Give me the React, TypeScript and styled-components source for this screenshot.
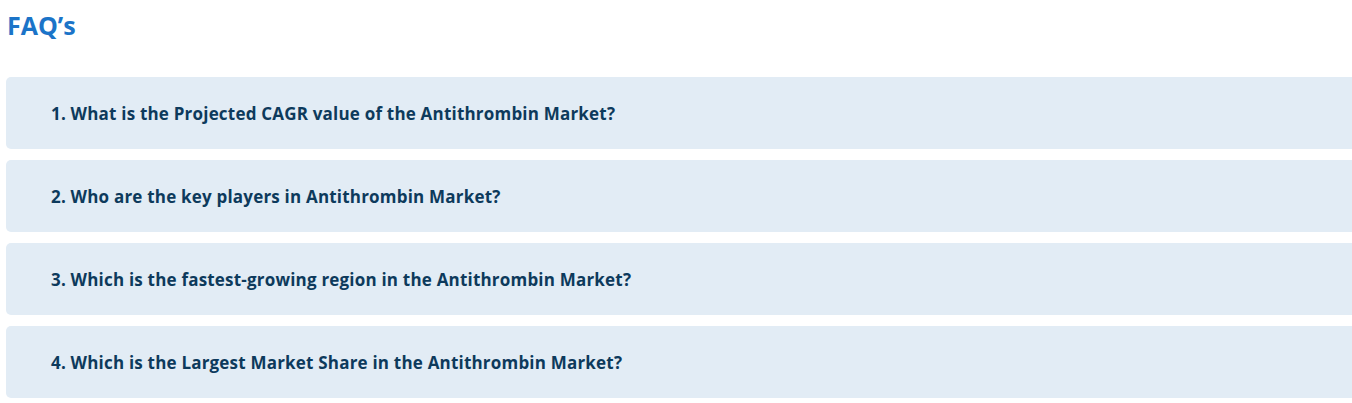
import React from 'react'
import styled, { createGlobalStyle } from 'styled-components'

const questions = [
    '1. What is the Projected CAGR value of the Antithrombin Market?',
    '2. Who are the key players in Antithrombin Market?',
    '3. Which is the fastest-growing region in the Antithrombin Market?',
    '4. Which is the Largest Market Share in the Antithrombin Market?',
]

const App: React.FC = () => {
    return (
        <>
            <GlobalStyle />
            <Section>
                <Title>FAQ’s</Title>
                <List>
                    {questions.map((q) => (
                        <Item key={q}>
                            <Question>{q}</Question>
                        </Item>
                    ))}
                </List>
            </Section>
        </>
    )
}

const GlobalStyle = createGlobalStyle`
    html, body {
        margin: 0;
        padding: 0;
        background: #ffffff;
        overflow: hidden;
    }
    body {
        font-family: "Open Sans", Lato, sans-serif;
        font-variant-ligatures: none;
    }
`
const Section = styled.section`
    display: flex;
    flex-direction: column;
    padding: 9px 0 0 6px;
    width: 1352px;
    height: 403px;
    box-sizing: border-box;
    overflow: hidden;
`
const Title = styled.h2`
    margin: 0 0 0 1px;
    font-size: 25px;
    line-height: 32px;
    font-weight: 700;
    color: #1b74c8;
`
const List = styled.ul`
    display: flex;
    flex-direction: column;
    gap: 11px;
    list-style: none;
    margin: 36px 0 0;
    padding: 0;
`
const Item = styled.li`
    display: flex;
    align-items: center;
    width: 1400px;
    height: 72px;
    padding-left: 45px;
    box-sizing: border-box;
    background: #e2ecf5;
    border-radius: 5px;
`
const Question = styled.span`
    font-size: 17px;
    font-weight: 700;
    letter-spacing: 0.2px;
    color: #0d3a5c;
`

export default App
